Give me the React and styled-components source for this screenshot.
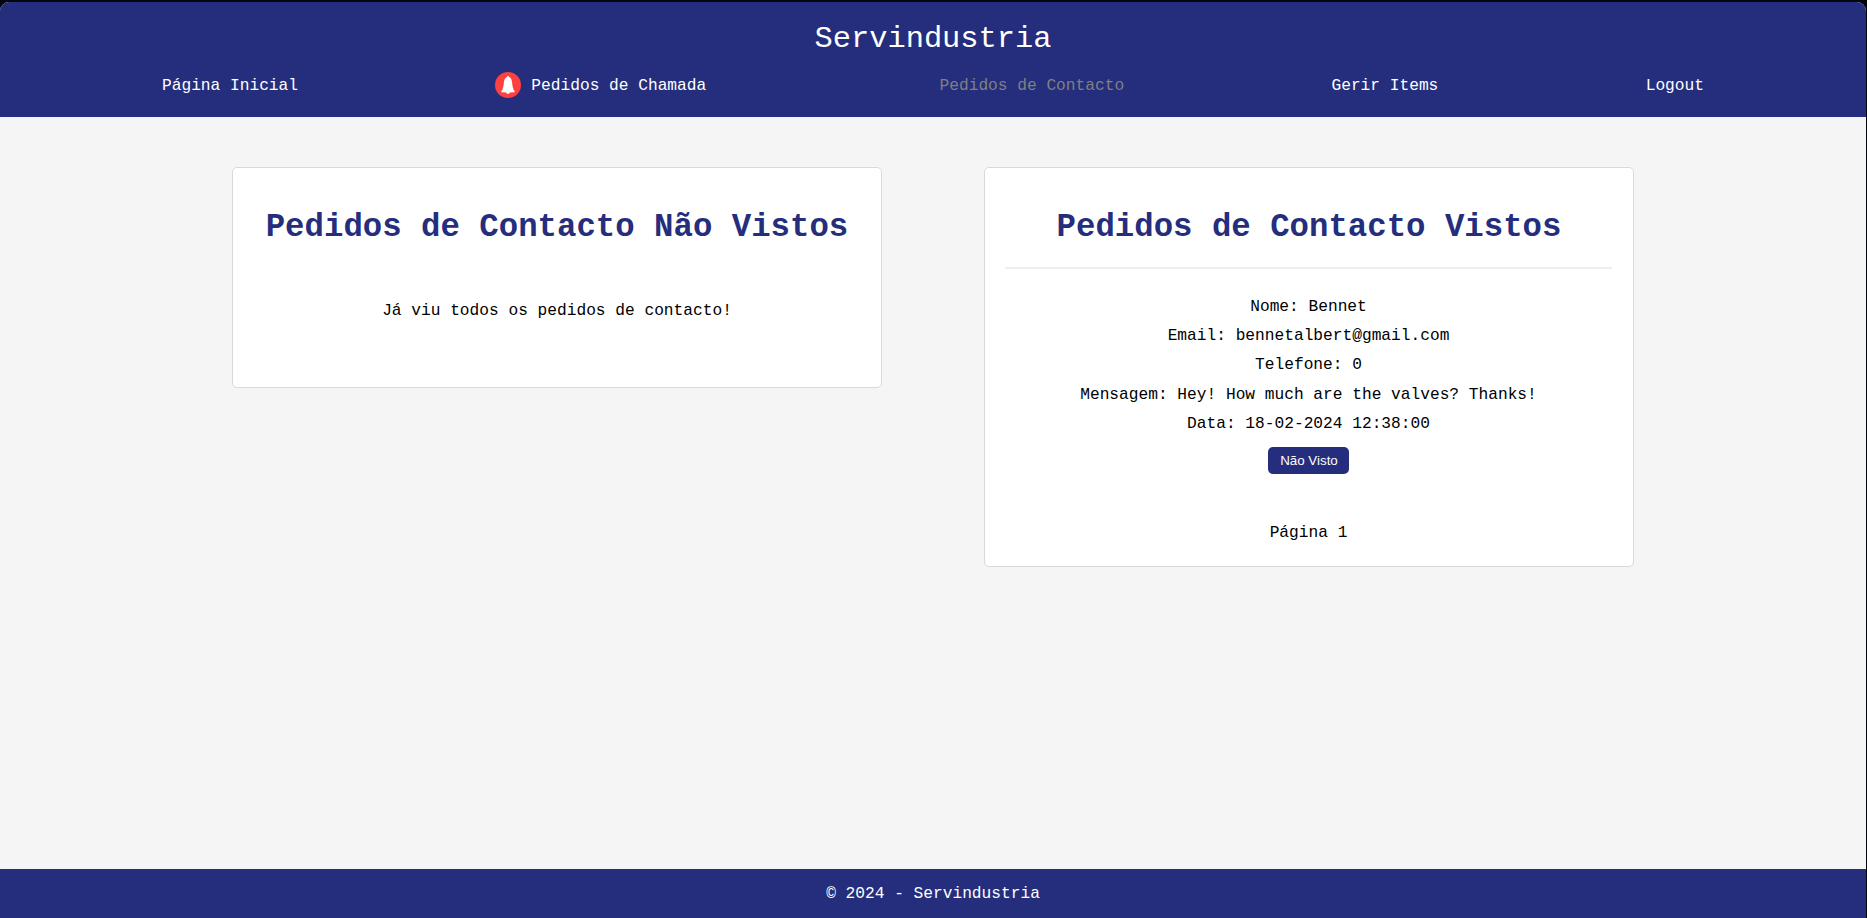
import React from "react";
import styled, { createGlobalStyle } from "styled-components";

const GlobalStyle = createGlobalStyle`
  * { box-sizing: border-box; }
  body {
    margin: 0;
    background: #02040f;
    color: #000;
    font-family: "Liberation Mono", "Courier New", monospace;
    font-size: 16.2px;
  }
`;

const Page = styled.div`
  display: flex;
  flex-direction: column;
  width: 1866px;
  height: 916px;
  margin-top: 2px;
  border-radius: 9px 9px 0 0;
  overflow: hidden;
  background: #f5f5f5;
`;

const Header = styled.header`
  height: 115px;
  padding-top: 19px;
  background: #252e7d;
  color: #fff;
`;

const Title = styled.div`
  font-size: 30.4px;
  line-height: 36px;
  text-align: center;
`;

const Nav = styled.nav`
  display: flex;
  justify-content: space-between;
  padding: 19px 162px 0;
`;

const NavItem = styled.a`
  position: relative;
  padding: 0 ${(p) => (p.$badged ? "26px" : "0")};
  line-height: 20px;
  color: ${(p) => (p.$current ? "#808080" : "#fff")};
  white-space: nowrap;
`;

const Badge = styled.svg`
  position: absolute;
  left: -10px;
  top: -4px;
  width: 26px;
  height: 26px;
`;

const Main = styled.main`
  flex: 1;
  display: flex;
  justify-content: center;
  align-items: flex-start;
  gap: 102px;
  padding-top: 50px;
`;

const Card = styled.section`
  width: 650px;
  height: ${(p) => p.$height}px;
  padding: 20px;
  border: 1px solid #d9d9d9;
  border-radius: 5px;
  background: #fff;
  text-align: center;
`;

const Heading = styled.h1`
  margin: 20px 0;
  font-size: 32.36px;
  line-height: 39px;
  color: #252e7d;
  white-space: nowrap;
`;

const Empty = styled.p`
  margin: 54px 0 0;
  line-height: 20px;
`;

const Request = styled.div`
  width: 607px;
  padding-top: 23.75px;
  border-top: 2px solid #eee;
`;

const Line = styled.p`
  margin: 0;
  line-height: 29.3px;
`;

const SeenButton = styled.button`
  display: block;
  width: 81px;
  height: 27px;
  margin: 8.25px auto 0;
  padding: 0 0 0 1px;
  border: 0;
  border-radius: 5px;
  background: #252e7d;
  color: #fff;
  font: 13.333px "Liberation Sans", Arial, sans-serif;
`;

const PageNumber = styled.p`
  margin: 49px 1px 0 0;
  line-height: 20px;
`;

const Footer = styled.footer`
  height: 49px;
  background: #252e7d;
  color: #fff;
  line-height: 50px;
  text-align: center;
`;

const details = [
  "Nome: Bennet",
  "Email: bennetalbert@gmail.com",
  "Telefone: 0",
  "Mensagem: Hey! How much are the valves? Thanks!",
  "Data: 18-02-2024 12:38:00",
];

export default function App() {
  return (
    <>
      <GlobalStyle />
      <Page>
        <Header>
          <Title>Servindustria</Title>
          <Nav>
            <NavItem>Página Inicial</NavItem>
            <NavItem $badged>
              <Badge viewBox="0 0 26 26">
                <circle cx="13" cy="13" r="13" fill="#ff4040" />
                <path
                  d="M13 4C12.400 4 12 4.400 12 5.100C10 6 9.200 7.800 8.900 10.400C8.500 14.200 8.100 16.800 6.400 19.200C6.100 19.700 6.300 20.100 6.900 20.200L11.300 20.600C11.500 21.600 12.100 22 13 22S14.500 21.600 14.700 20.600L19.100 20.200C19.700 20.100 19.900 19.700 19.600 19.200C17.900 16.800 17.500 14.200 17.100 10.400C16.800 7.800 16 6 14 5.100C14 4.400 13.600 4 13 4Z"
                  fill="#fff"
                />
              </Badge>
              Pedidos de Chamada
            </NavItem>
            <NavItem $current>Pedidos de Contacto</NavItem>
            <NavItem>Gerir Items</NavItem>
            <NavItem>Logout</NavItem>
          </Nav>
        </Header>
        <Main>
          <Card $height={221}>
            <Heading>Pedidos de Contacto Não Vistos</Heading>
            <Empty>Já viu todos os pedidos de contacto!</Empty>
          </Card>
          <Card $height={400}>
            <Heading>Pedidos de Contacto Vistos</Heading>
            <Request>
              {details.map((text) => (
                <Line key={text}>{text}</Line>
              ))}
              <SeenButton>Não Visto</SeenButton>
            </Request>
            <PageNumber>Página 1</PageNumber>
          </Card>
        </Main>
        <Footer>© 2024 - Servindustria</Footer>
      </Page>
    </>
  );
}
